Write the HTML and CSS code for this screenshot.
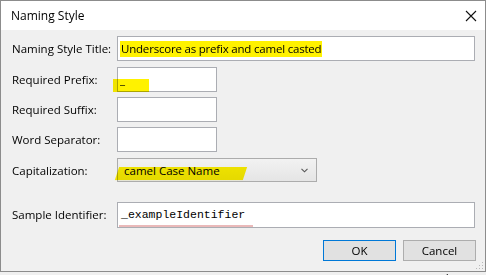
FILE: index.html
```html
<!DOCTYPE html>
<html lang="en">

<head>
    <meta charset="UTF-8">
    <meta name="viewport" content="width=device-width, initial-scale=1.0">
    <title>Naming Style</title>
    <link rel="stylesheet" href="styles.css">
</head>

<body>
    <div class="dialog">
        <div class="titlebar">
            <span class="title">Naming Style</span>
            <svg class="close" width="12" height="12" viewBox="0 0 12 12">
                <path d="M1 1 L11 11 M11 1 L1 11" stroke="#111" stroke-width="1.1" fill="none" />
            </svg>
        </div>

        <div class="content">
            <div class="form">
                <div class="label">Naming Style Title:</div>
                <div class="box wide"><span class="marker">Underscore as prefix and camel casted</span></div>

                <div class="label">Required Prefix:</div>
                <div class="box short">
                    _
                    <span class="pen pen-prefix"></span>
                </div>

                <div class="label">Required Suffix:</div>
                <div class="box short"></div>

                <div class="label">Word Separator:</div>
                <div class="box short"></div>

                <div class="label">Capitalization:</div>
                <div class="select">
                    <span>camel Case Name</span>
                    <svg width="7" height="5" viewBox="0 0 7 5">
                        <path d="M0.5 0.8 L3.5 3.8 L6.5 0.8" stroke="#555" stroke-width="1.1" fill="none" />
                    </svg>
                    <span class="pen pen-caps"></span>
                </div>

                <div class="label sample-label">Sample Identifier:</div>
                <div class="box wide sample"><span class="squiggle">_exampleIdentifier</span></div>
            </div>

            <div class="buttons">
                <button type="button" class="btn default">OK</button>
                <button type="button" class="btn">Cancel</button>
            </div>

            <svg class="grip" width="8" height="8" viewBox="0 0 8 8">
                <rect x="6" y="0" width="1" height="1" fill="#b8b8b8" />
                <rect x="3" y="3" width="1" height="1" fill="#b8b8b8" />
                <rect x="6" y="3" width="1" height="1" fill="#b8b8b8" />
                <rect x="0" y="6" width="1" height="1" fill="#b8b8b8" />
                <rect x="3" y="6" width="1" height="1" fill="#b8b8b8" />
                <rect x="6" y="6" width="1" height="1" fill="#b8b8b8" />
            </svg>
        </div>
    </div>

    <div class="behind">
        <span class="behind-btn">Naming styles</span>
    </div>
</body>

</html>
```

FILE: styles.css
```css
body {
    margin: 0;
    background-color: #f0f0f0;
    font-family: "Segoe UI", "Open Sans", sans-serif;
    font-size: 11.5px;
    color: #000;
    overflow: hidden;
}

.dialog {
    width: 486px;
    box-sizing: border-box;
    border: 1px solid #8c8c8c;
    background-color: #f0f0f0;
}

.titlebar {
    height: 29px;
    display: flex;
    align-items: center;
    justify-content: space-between;
    background-color: #ffffff;
    padding: 0 8px 0 10px;
}

.title {
    font-size: 12px;
}

.content {
    position: relative;
    padding: 6px 9px 10px 11px;
}

.form {
    display: grid;
    grid-template-columns: 105px 1fr;
    grid-template-rows: 31px 30px 30px 31px 44px 26px;
    align-items: start;
}

.label {
    line-height: 25px;
}

.sample-label {
    line-height: 26px;
}

.box {
    position: relative;
    height: 25px;
    box-sizing: border-box;
    border: 1px solid #abadb3;
    background-color: #ffffff;
    padding: 0 2px;
    line-height: 23px;
}

.wide {
    width: 358px;
}

.short {
    width: 100px;
}

.marker {
    display: inline-block;
    line-height: 16px;
    padding: 0 1px;
    letter-spacing: -0.2px;
    background-color: #fff200;
}

.pen {
    position: absolute;
    background-color: #fff200;
    mix-blend-mode: multiply;
}

.pen-prefix {
    left: -5px;
    top: 11px;
    width: 36px;
    height: 13px;
}

.select {
    position: relative;
    width: 200px;
    height: 24px;
    box-sizing: border-box;
    border: 1px solid #acacac;
    background: linear-gradient(#f2f2f2, #e5e5e5);
    display: flex;
    align-items: center;
    justify-content: space-between;
    padding: 0 8px 0 6px;
}

.pen-caps {
    left: -1px;
    top: 8px;
    width: 128px;
    height: 13px;
    transform: skewX(-18deg);
}

.sample {
    height: 26px;
    line-height: 24px;
    font-family: "Liberation Mono", monospace;
    font-size: 11.5px;
    padding-left: 3px;
}

.squiggle {
    display: inline-block;
    line-height: 20px;
    padding: 0 8px 0 0;
    margin-left: -2px;
    padding-left: 2px;
    border-bottom: 2px solid #eab9b9;
}

.buttons {
    display: flex;
    justify-content: flex-end;
    gap: 7px;
    margin-top: 12px;
}

.btn {
    width: 73px;
    height: 21px;
    padding: 0;
    font-family: inherit;
    font-size: 11.5px;
    background-color: #e1e1e1;
    border: 1px solid #adadad;
    color: #000;
}

.btn.default {
    border-color: #0078d7;
}

.grip {
    position: absolute;
    right: 1px;
    bottom: 1px;
}

.behind {
    height: 4px;
    overflow: hidden;
    padding-left: 374px;
}

.behind-btn {
    display: inline-block;
    width: 96px;
    box-sizing: border-box;
    border: 1px solid #adadad;
    border-top: none;
    text-align: center;
    line-height: 8px;
    margin-top: -3px;
    font-size: 12px;
}
```
